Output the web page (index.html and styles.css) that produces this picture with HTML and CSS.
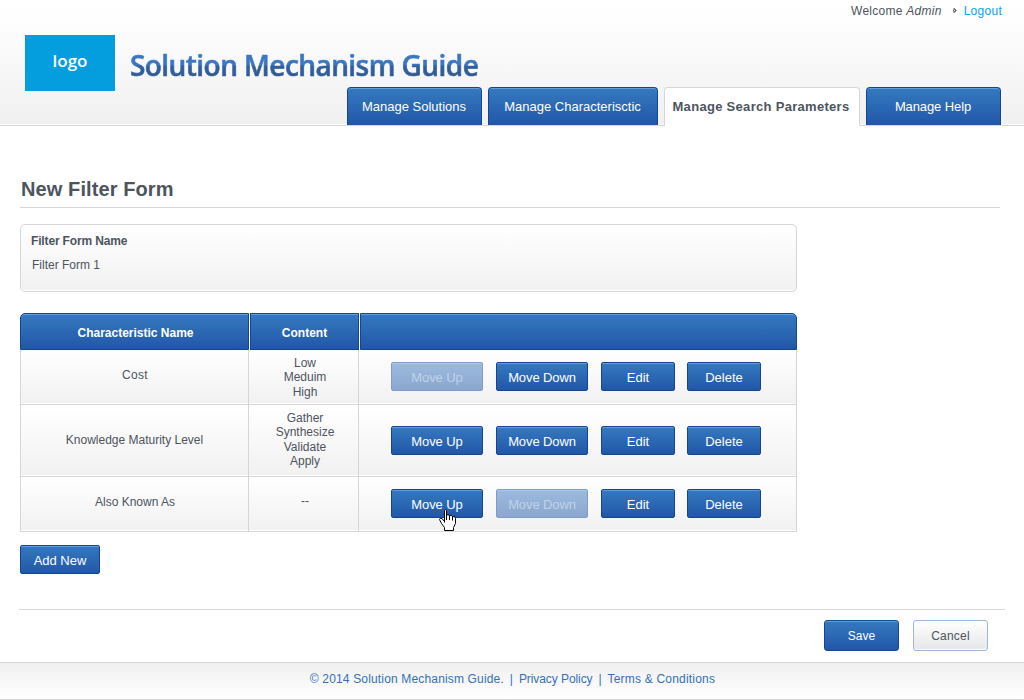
FILE: index.html
```html
<!DOCTYPE html>
<html lang="en">
<head>
<meta charset="utf-8">
<title>Solution Mechanism Guide</title>
<link rel="stylesheet" href="styles.css">
</head>
<body>
<header class="header">
  <div class="user"><span>Welcome <em>Admin</em></span>
    <svg class="chevron" width="4" height="5" viewBox="0 0 4 5"><path d="M.8 .3 3 2.500 .8 4.700M.5 1.500v2" fill="none" stroke="#4d545e" stroke-width="1.1"/></svg>
    <a class="logout">Logout</a></div>
  <div class="brand">
    <div class="logo">logo</div>
    <h1 class="title">Solution Mechanism Guide</h1>
  </div>
  <nav class="tabs">
    <a class="tab w135">Manage Solutions</a>
    <a class="tab w170">Manage Characterisctic</a>
    <a class="tab active">Manage Search Parameters</a>
    <a class="tab w135 help">Manage Help</a>
  </nav>
</header>
<main class="main">
  <h2 class="heading">New Filter Form</h2>
  <section class="panel">
    <div class="label">Filter Form Name</div>
    <div class="value">Filter Form 1</div>
  </section>
  <section class="table">
    <div class="row head">
      <div class="cell">Characteristic Name</div>
      <div class="cell">Content</div>
      <div class="cell"></div>
    </div>
    <div class="row r1">
      <div class="cell name cost">Cost</div>
      <div class="cell content">Low<br>Meduim<br>High</div>
      <div class="cell actions"><a class="btn move off">Move Up</a><a class="btn move">Move Down</a><a class="btn">Edit</a><a class="btn">Delete</a></div>
    </div>
    <div class="row r2">
      <div class="cell name level">Knowledge Maturity Level</div>
      <div class="cell content values">Gather<br>Synthesize<br>Validate<br>Apply</div>
      <div class="cell actions"><a class="btn move">Move Up</a><a class="btn move">Move Down</a><a class="btn">Edit</a><a class="btn">Delete</a></div>
    </div>
    <div class="row r3">
      <div class="cell name known">Also Known As</div>
      <div class="cell content dash">--</div>
      <div class="cell actions"><a class="btn move">Move Up<svg class="cursor" width="18" height="23" viewBox="0 0 18 23"><path d="M5.5 13.5V1.5Q6.5 0 7.5 1.5V6.5Q9 4.8 10.5 6.5Q12 5.5 13.5 7.5Q16.5 7 16.5 9.5V14.5L14.5 18.5V21.5H5.5V18.5L2.5 14.5L.5 10.5Q1 8.5 3 9.5L5.5 12.5" fill="#fff" stroke="#000"/><path d="M7.5 6v5M10.5 6.5v4.5M13.5 7.5v4" stroke="#000" fill="none"/></svg></a><a class="btn move off">Move Down</a><a class="btn">Edit</a><a class="btn">Delete</a></div>
    </div>
  </section>
  <a class="btn add">Add New</a>
  <div class="formbar"><a class="btn big">Save</a><a class="btn big cancel">Cancel</a></div>
</main>
<footer class="footer">
  <span class="copy">© 2014 Solution Mechanism Guide.</span><span class="sep">|</span><a class="privacy">Privacy Policy</a><span class="sep">|</span><a class="terms">Terms &amp; Conditions</a>
</footer>
</body>
</html>
```
FILE: styles.css
```css
* { box-sizing: border-box; }
body {
  margin: 0;
  width: 1024px;
  height: 700px;
  overflow: hidden;
  display: flex;
  flex-direction: column;
  background: #fff;
  color: #4d545e;
  font: 12px/14px "Liberation Sans", Arial, sans-serif;
}
.header {
  height: 126px;
  display: flex;
  flex-direction: column;
  background: linear-gradient(#fff, #fefefe 15%, #f0f0f0) no-repeat 0 0 / 100% 124px #fff;
  border-bottom: 1px solid #d6d6d6;
}
.user {
  height: 35px;
  flex: none;
  padding: 4px 22px 0 0;
  display: flex;
  justify-content: flex-end;
  letter-spacing: .27px;
}
.chevron { margin: 4px 7px 0 11px; }
.logout { color: #0a9ff0; }
.brand { height: 52px; flex: none; display: flex; padding-left: 25px; }
.logo {
  width: 90px;
  height: 56px;
  background: #049ddd;
  color: #fff;
  text-align: center;
  font: 600 17px/52px "Open Sans", "Noto Sans", sans-serif;
}
.title {
  margin: 10px 0 0 15px;
  height: 42px;
  font: 600 28px/40px "Open Sans", "Noto Sans", sans-serif;
  letter-spacing: -.56px;
  white-space: nowrap;
  color: transparent;
  -webkit-text-stroke: .6px transparent;
  background: linear-gradient(#3b76c0 0 20px, #315f9f 21px, #315c94 32px);
  -webkit-background-clip: text;
  background-clip: text;
}
.tabs { height: 38px; flex: none; display: flex; gap: 6px; padding-left: 347px; }
.tab {
  height: 38px;
  border: 1px solid #15458f;
  border-bottom: 0;
  border-radius: 4px 4px 0 0;
  background: linear-gradient(#3579bf, #2157a8);
  box-shadow: inset 0 1px #659bdb;
  color: #fff;
  text-align: center;
  font-size: 13px;
  line-height: 37px;
}
.w135 { width: 135px; padding-right: 1px; }
.w170 { width: 170px; padding-right: 1px; }
.help { letter-spacing: -.1px; }
.tab.active {
  width: 196px;
  height: 39px;
  padding-right: 2px;
  background: #fff;
  border-color: #d6d6d6;
  box-shadow: none;
  color: #4d545e;
  font-weight: bold;
  letter-spacing: .3px;
  white-space: nowrap;
}
.main { height: 536px; padding: 50px 19px 0 20px; }
.heading {
  width: 980px;
  height: 32px;
  margin: 0 0 16px;
  padding-left: 1px;
  font-size: 20px;
  line-height: 26px;
  letter-spacing: .1px;
  border-bottom: 1px solid #d6d6d6;
}
.panel {
  width: 777px;
  height: 68px;
  padding: 9px 11px;
  border: 1px solid #d6d6d6;
  border-radius: 5px;
  background: linear-gradient(#fff, #f1f1f1);
  box-shadow: inset 0 -1px #fff;
}
.label { margin-left: -1px; font-weight: bold; letter-spacing: -.15px; }
.value { margin-top: 10px; }
.table { width: 777px; margin-top: 21px; }
.row { display: grid; grid-template-columns: 229px 110px 438px; }
.cell {
  display: flex;
  align-items: center;
  justify-content: center;
  text-align: center;
  border-right: 1px solid #d6d6d6;
  border-bottom: 1px solid #d6d6d6;
  background: linear-gradient(#fff, #f1f1f1);
  box-shadow: inset 0 -1px #fff;
  line-height: 14.5px;
}
.cell:first-child { border-left: 1px solid #d6d6d6; }
.name { padding: 0 0 4px 1px; }
.cost { letter-spacing: .3px; }
.level { padding: 0; }
.content { padding: 1px 0 0 3px; }
.values { padding: 0 0 2px 3px; }
.dash { padding: 0 0 5px 3px; }
.head { height: 37px; }
.head .cell {
  border: 1px solid #15458f;
  background: linear-gradient(#3579bf, #2157a8);
  box-shadow: inset 0 1px #659bdb;
  color: #fff;
  font-weight: bold;
  padding: 3px 0 0 2px;
}
.head .cell:nth-child(n+2) { margin-left: 1px; padding-left: 0; }
.head .cell:first-child { border-top-left-radius: 5px; }
.head .cell:last-child { border-top-right-radius: 5px; }
.r1 { height: 55px; }
.r2 { height: 72px; }
.r3 { height: 55px; }
.cell.actions { justify-content: flex-start; padding-left: 32px; }
.r1 .actions, .r3 .actions { padding-bottom: 1px; }
.btn {
  display: block;
  position: relative;
  width: 74px;
  height: 29px;
  margin-right: 12px;
  border: 1px solid #15458f;
  border-radius: 2px;
  background: linear-gradient(#3579bf, #2157a8);
  box-shadow: inset 0 1px #659bdb;
  color: #fff;
  text-align: center;
  font-size: 13px;
  line-height: 30px;
}
.move { width: 92px; margin-right: 13px; letter-spacing: -.1px; }
.off { border-color: #7f9cc8; background: linear-gradient(#9bbbde, #8ca6cf); box-shadow: inset 0 1px #aecaea; color: #bfd2ea; }
.cursor { position: absolute; left: 47px; top: 19px; z-index: 2; }
.add { width: 80px; margin-top: 13px; }
.formbar {
  width: 986px;
  height: 42px;
  margin: 35px 0 0 -1px;
  padding: 10px 17px 0 0;
  display: flex;
  justify-content: flex-end;
  gap: 14px;
  border-top: 1px solid #d6d6d6;
}
.big { width: 75px; height: 31px; margin: 0; border-radius: 3px; font-size: 12px; }
.cancel {
  border-color: #9bb8dc;
  background: linear-gradient(#fff, #e5e6e7);
  box-shadow: inset 0 -1px #fff;
  color: #4d545e;
  letter-spacing: .2px;
}
.footer {
  height: 38px;
  padding: 9px 0 0 1px;
  display: flex;
  justify-content: center;
  border-top: 1px solid #d6d6d6;
  border-bottom: 1px solid #d6d6d6;
  background: linear-gradient(#f0f0f0, #fff);
  color: #3470b8;
}
.copy { letter-spacing: .16px; }
.privacy { letter-spacing: -.08px; }
.terms { letter-spacing: .2px; }
.sep { width: 15px; text-align: center; }
```
